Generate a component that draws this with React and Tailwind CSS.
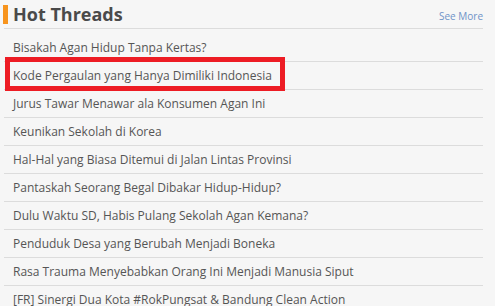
export default function App() {
  const rows = [
    "Bisakah Agan Hidup Tanpa Kertas?",
    "Kode Pergaulan yang Hanya Dimiliki Indonesia",
    "Jurus Tawar Menawar ala Konsumen Agan Ini",
    "Keunikan Sekolah di Korea",
    "Hal-Hal yang Biasa Ditemui di Jalan Lintas Provinsi",
    "Pantaskah Seorang Begal Dibakar Hidup-Hidup?",
    "Dulu Waktu SD, Habis Pulang Sekolah Agan Kemana?",
    "Penduduk Desa yang Berubah Menjadi Boneka",
    "Rasa Trauma Menyebabkan Orang Ini Menjadi Manusia Siput",
    "[FR] Sinergi Dua Kota #RokPungsat & Bandung Clean Action",
  ];
  return (
    <div
      className="w-[495px] h-[306px] overflow-hidden bg-[#f6f6f6]"
      style={{ fontFamily: '"Open Sans", "Noto Sans", sans-serif' }}
    >
      <div className="ml-[4px] w-[479px]">
        <div className="flex items-start justify-between pt-[5px] pb-[4px] border-b border-[#dcdcdc] mb-[5px]">
          <div className="flex items-start">
            <div className="w-[5px] h-[19px] bg-[#f7941d] -ml-[1px]" />
            <div className="ml-[5px] text-[18px] leading-[19px] font-bold text-[#4a4a4a]">
              Hot Threads
            </div>
          </div>
          <div className="mt-[4px] text-[10px] leading-[14px] text-[#6f93c8]">See More</div>
        </div>
        {rows.map((t, i) => (
          <div
            key={i}
            className="relative h-[28px] border-b border-[#dcdcdc] pl-[9px] flex items-center text-[12px] text-[#555555] whitespace-nowrap"
          >
            {t}
            {i === 1 && (
              <div className="absolute left-[1px] top-[-5px] w-[280px] h-[34px] border-[5px] border-[#ed1c24]" />
            )}
          </div>
        ))}
      </div>
    </div>
  );
}
